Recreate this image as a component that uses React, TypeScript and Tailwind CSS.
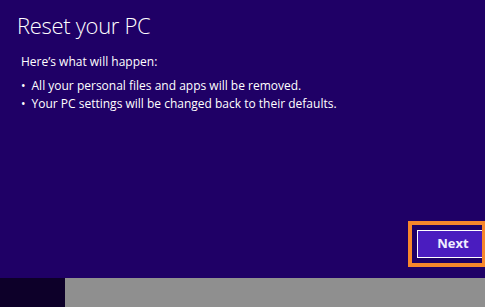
export default function App() {
  return (
    <div className="w-[485px] h-[307px] flex flex-col bg-[#1f0066] text-white overflow-hidden font-['Segoe_UI','Open_Sans',sans-serif]">
      <div className="flex-1 flex flex-col pl-[17px]">
        <h1 className="mt-[9px] text-[22px] font-light leading-[32px] tracking-[-0.3px]">Reset your PC</h1>
        <p className="mt-[12px] ml-[4px] text-[12px] leading-[18px]">Here’s what will happen:</p>
        <ul className="mt-[6px] ml-[4px] text-[12px] leading-[18px]">
          <li className="flex gap-[6px]">
            <span>•</span>
            <span>All your personal files and apps will be removed.</span>
          </li>
          <li className="flex gap-[6px]">
            <span>•</span>
            <span>Your PC settings will be changed back to their defaults.</span>
          </li>
        </ul>
        <div className="flex-1" />
        <div className="flex justify-end mb-[11px]">
          <div className="border-[4px] border-r-[3px] border-[#f7862b] py-[5px] pl-[5px]">
            <button className="w-[65px] h-[28px] border border-r-0 border-white bg-[#4a1cbf] text-[13px] font-bold text-[#f0ecff] pl-[6px]">
              Next
            </button>
          </div>
        </div>
      </div>
      <div className="h-[29px] flex">
        <div className="w-[65px] bg-[#0d0029]" />
        <div className="flex-1 bg-[#8f8f8f]" />
      </div>
    </div>
  );
}
